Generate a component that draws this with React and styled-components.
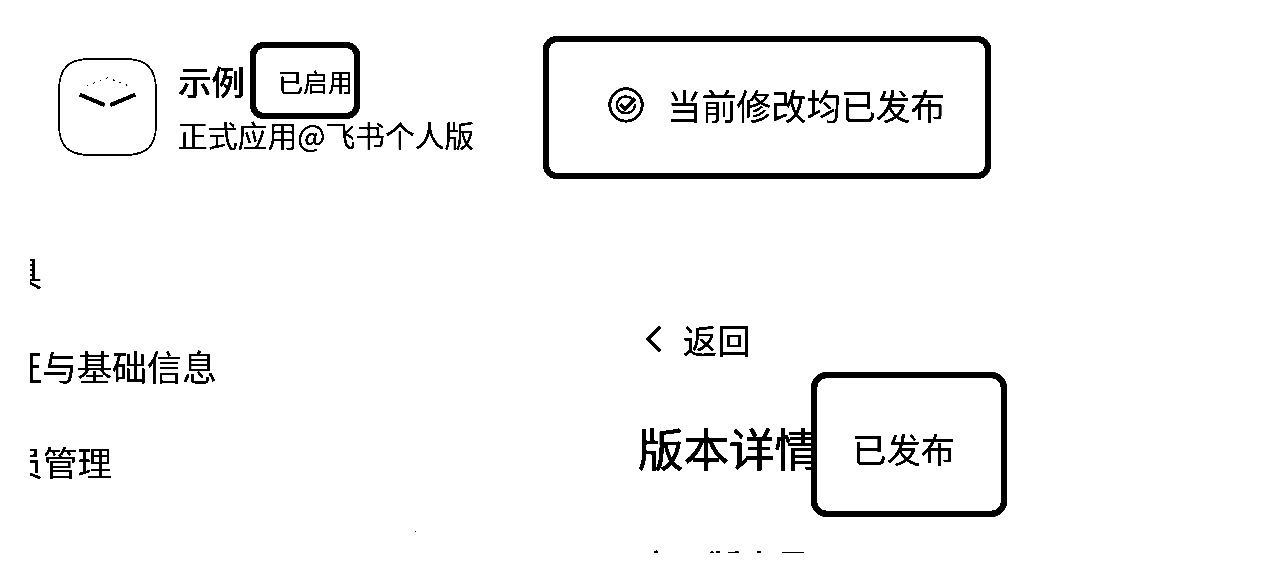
import React from "react";
import styled, { createGlobalStyle } from "styled-components";

const Global = createGlobalStyle`
  html, body { margin: 0; background: #fff; }
  body { font-family: "Noto Sans CJK SC", "Noto Sans", sans-serif; color: #000; }
`;

const Page = styled.div`
  position: relative;
  display: grid;
  grid-template-columns: 543px 448px;
  width: 1280px;
  height: 553px;
  overflow: hidden;
  background: #fff;
  filter: grayscale(1) brightness(0.72) contrast(30);
`;

const LeftColumn = styled.aside`
  display: flex;
  flex-direction: column;
  padding-top: 42px;
`;

const AppHeader = styled.header`
  display: flex;
  gap: 21px;
  padding-left: 58px;
`;

const AppIcon = styled.svg`
  flex: none;
  width: 99px;
  height: 99px;
  margin-top: 16px;
`;

const AppInfo = styled.div`
  display: flex;
  flex-direction: column;
`;

const TitleRow = styled.div`
  display: flex;
  align-items: center;
  gap: 5px;
`;

const AppName = styled.span`
  font-size: 33.5px;
  font-weight: 500;
  line-height: 1;
`;

const Badge = styled.span`
  box-sizing: border-box;
  display: flex;
  align-items: center;
  justify-content: flex-start;
  flex: none;
  width: ${(p) => (p.$large ? 196 : 110)}px;
  height: ${(p) => (p.$large ? 145 : 77)}px;
  padding-left: ${(p) => (p.$large ? 35 : 22)}px;
  padding-top: ${(p) => (p.$large ? 6 : 0)}px;
  border: 6px solid #000;
  border-radius: ${(p) => (p.$large ? 16 : 14)}px;
  background: #fff;
  font-size: ${(p) => (p.$large ? 34.4 : 25)}px;
  white-space: nowrap;
`;

const AppSub = styled.div`
  margin-top: -2px;
  font-size: 29.8px;
  line-height: 34px;
  white-space: nowrap;
`;

const NavList = styled.nav`
  display: flex;
  flex-direction: column;
  margin: 94px 0 0 30px;
  overflow: hidden;
`;

const NavItem = styled.div`
  height: 95px;
  margin-left: ${(p) => p.$shift}px;
  font-size: ${(p) => p.$size || 34.5}px;
  line-height: 40px;
  white-space: nowrap;
`;

const RightColumn = styled.main`
  display: flex;
  flex-direction: column;
  padding-top: 36px;
`;

const StatusBanner = styled.div`
  box-sizing: border-box;
  display: flex;
  align-items: center;
  gap: 23px;
  width: 448px;
  height: 143px;
  padding: 0 0 6px 59px;
  border: 6px solid #000;
  border-radius: 14px;
  font-size: 34.8px;
  white-space: nowrap;
`;

const Detail = styled.section`
  display: flex;
  flex-direction: column;
  padding-left: 95px;
`;

const BackRow = styled.div`
  display: flex;
  align-items: center;
  gap: 21px;
  height: 40px;
  margin-top: 140px;
  padding-left: 7px;
  font-size: 34px;
`;

const DetailHead = styled.div`
  display: flex;
  align-items: center;
  width: 400px;
  margin-top: 13px;
`;

const DetailTitle = styled.h1`
  flex: none;
  width: 173px;
  margin: 6px 0 0;
  font-size: 45.5px;
  font-weight: 400;
  -webkit-text-stroke: 0.5px #000;
  line-height: 1;
  white-space: nowrap;
`;

const FieldLabel = styled.div`
  margin-top: 28px;
  font-size: 34.5px;
  font-weight: 500;
  line-height: 40px;
  white-space: nowrap;
`;

const Speck = styled.i`
  position: absolute;
  left: 415px;
  top: 531px;
  width: 1px;
  height: 1px;
  background: #000;
`;

export default function App() {
  return (
    <Page>
      <Global />
      <LeftColumn>
        <AppHeader>
          <AppIcon viewBox="0 0 100 100" fill="none" stroke="#000">
            <path d="M32 1 H68 C90 1 99 11 99 33 V67 C99 89 90 98 68 98 H32 C10 98 1 89 1 67 V33 C1 11 10 1 32 1 Z" strokeWidth="1.4" />
            <path d="M22 37 L47 47.5 M53 47.5 L78 37" strokeWidth="3.8" />
            <path d="M29 28 L50 20 L71 28" strokeWidth="0.8" strokeDasharray="2 5" />
          </AppIcon>
          <AppInfo>
            <TitleRow>
              <AppName>示例</AppName>
              <Badge>已启用</Badge>
            </TitleRow>
            <AppSub>正式应用@飞书个人版</AppSub>
          </AppInfo>
        </AppHeader>
        <NavList>
          <NavItem $shift={-57}>工具</NavItem>
          <NavItem $shift={-58} $size={35}>凭证与基础信息</NavItem>
          <NavItem $shift={-56}>成员管理</NavItem>
        </NavList>
      </LeftColumn>
      <RightColumn>
        <StatusBanner>
          <svg width="36" height="36" viewBox="0 0 36 36" fill="none" stroke="#000">
            <circle cx="18" cy="18" r="16.2" strokeWidth="2.6" />
            <path d="M24 11.5 C22 10 20 9.5 18 9.5 C12 9.5 9 13.5 9 18 C9 22.5 12 26 18 26 C23 26 27 23 27 17" strokeWidth="2" />
            <path d="M12.5 17.5 L17 22 L27 11.5" strokeWidth="3.4" />
          </svg>
          当前修改均已发布
        </StatusBanner>
        <Detail>
          <BackRow>
            <svg width="17" height="28" viewBox="0 0 17 28" fill="none" stroke="#000" strokeWidth="3.6">
              <path d="M15 2 L3 14 L15 26" />
            </svg>
            返回
          </BackRow>
          <DetailHead>
            <DetailTitle>版本详情</DetailTitle>
            <Badge $large>已发布</Badge>
          </DetailHead>
          <FieldLabel>应用版本号</FieldLabel>
        </Detail>
      </RightColumn>
      <Speck />
    </Page>
  );
}
